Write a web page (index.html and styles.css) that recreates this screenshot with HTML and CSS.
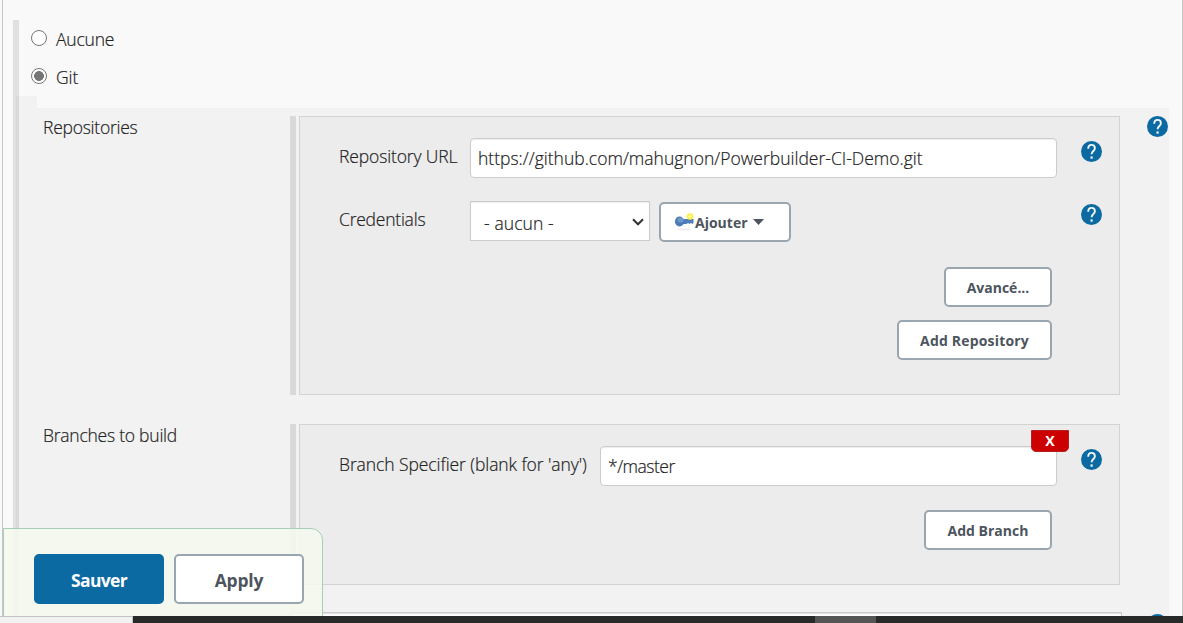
FILE: index.html
```html
<!DOCTYPE html>
<html lang="fr">
<head>
<meta charset="utf-8">
<title>Configuration</title>
<link rel="stylesheet" href="styles.css">
</head>
<body>
<svg width="0" height="0" class="defs">
  <symbol id="help" viewBox="0 0 21 21">
    <circle cx="10.5" cy="10.5" r="10.5" fill="#0b6aa2"/>
    <path d="M7.2 7.8C7.2 5.300 8.6 3.900 10.5 3.900S13.9 5.300 13.9 7.3C13.9 9.800 10.6 10.2 10.6 13.2" fill="none" stroke="#f2f6f9" stroke-width="1.9"/>
    <rect x="9.5" y="15.4" width="2.2" height="2.3" fill="#f2f6f9"/>
  </symbol>
</svg>
<main class="page">
  <div class="scm">
    <div class="choice"><span class="radio"></span><span class="t-aucune">Aucune</span></div>
    <div class="choice"><span class="radio on"></span><span class="t-git">Git</span></div>
    <section class="details">
      <div class="row repos">
        <div class="name"><span class="t-repos">Repositories</span></div>
        <div class="bar"></div>
        <div class="box">
          <div class="field">
            <label><span class="t-url">Repository URL</span></label>
            <div class="input"><span class="t-link">https://github.com/mahugnon/Powerbuilder-CI-Demo.git</span></div>
            <svg class="help"><use href="#help"/></svg>
          </div>
          <div class="field cred">
            <label><span class="t-cred">Credentials</span></label>
            <div class="select"><span class="t-none">- aucun -</span>
              <svg width="12" height="8" viewBox="0 0 12 8"><path d="M1 1.300L6 6.300L11 1.300" fill="none" stroke="#333" stroke-width="2"/></svg>
            </div>
            <div class="btn add">
              <svg width="20" height="20" viewBox="0 0 20 20">
                <ellipse cx="9" cy="17.500" rx="7" ry="1" fill="#eeeeee"/>
                <path d="M8 7h10.500v4l-1 1-1.500-1-1.500 1-1.500-1-1.500 1H8z" fill="#527eb5"/>
                <ellipse cx="4.500" cy="9.500" rx="4.600" ry="5" fill="#4c7bb5"/>
                <ellipse cx="5.500" cy="8" rx="3" ry="2.500" fill="#7099cb"/>
                <circle cx="15" cy="4.500" r="3.300" fill="#fff14a"/>
                <circle cx="15" cy="4.500" r="1.300" fill="#fffab0"/>
              </svg><span class="t-add">Ajouter</span>
              <svg class="caret" width="11" height="6" viewBox="0 0 11 6"><path d="M0 0h11L5.500 6z" fill="#4d545d"/></svg>
            </div>
            <svg class="help"><use href="#help"/></svg>
          </div>
          <div class="actions">
            <div class="btn b-adv"><span class="t-adv">Avancé...</span></div>
            <div class="btn b-repo"><span class="t-addrepo">Add Repository</span></div>
          </div>
        </div>
        <svg class="help outer"><use href="#help"/></svg>
      </div>
      <div class="row branches">
        <div class="name"><span class="t-branches">Branches to build</span></div>
        <div class="bar"></div>
        <div class="box">
          <div class="field wide">
            <label><span class="t-spec">Branch Specifier (blank for 'any')</span></label>
            <div class="input"><span class="t-master">*/master</span></div>
            <svg class="help"><use href="#help"/></svg>
          </div>
          <div class="actions">
            <div class="btn b-branch"><span class="t-addbranch">Add Branch</span></div>
          </div>
          <div class="remove">X</div>
        </div>
      </div>
      <div class="row next">
        <div class="name"></div>
        <div class="nextbox"></div>
        <svg class="help outer"><use href="#help"/></svg>
      </div>
    </section>
  </div>
  <div class="sticky">
    <div class="big primary"><span class="t-save">Sauver</span></div>
    <div class="big"><span class="t-apply">Apply</span></div>
  </div>
</main>
<footer class="taskbar"><div class="status"></div><div class="task"></div></footer>
</body>
</html>
```
FILE: styles.css
```css
* { box-sizing: border-box; }
body {
  margin: 0;
  width: 1183px;
  height: 623px;
  overflow: hidden;
  background: #f9f9f9;
  font: 300 17.5px/24px "Open Sans", "Noto Sans", sans-serif;
  color: #222;
  -webkit-text-stroke: .2px #222;
}
svg { display: block; flex: none; }
span { white-space: nowrap; }
.t-aucune { letter-spacing: -.2px; }
.t-git { letter-spacing: -.1px; }
.t-repos { letter-spacing: -.25px; }
.t-url { letter-spacing: -.13px; }
.t-link { letter-spacing: 0; }
.t-cred { letter-spacing: -.23px; }
.t-none { letter-spacing: .1px; }
.t-branches { letter-spacing: -.24px; }
.t-spec { letter-spacing: -.08px; }
.t-master { letter-spacing: -.5px; }
.t-save { letter-spacing: -.65px; }
.t-apply { letter-spacing: -.2px; }
.t-addrepo { letter-spacing: .18px; }
.defs { position: absolute; }
.page {
  position: relative;
  height: 616px;
  margin-left: 2px;
  padding: 20px 13px 0 10px;
  overflow: hidden;
  border: 1px solid #c6c6c6;
  border-width: 0 1px;
}
.scm { border-left: 6px solid #e0e0e0; height: 640px; }
.choice { display: flex; height: 38px; padding: 7px 0 0 12px; }
.choice .radio { margin: 3px 9px 0 0; }
.radio {
  width: 16px;
  height: 16px;
  border: 1px solid #767676;
  border-radius: 50%;
  background: #fff;
}
.radio.on { background: radial-gradient(circle, #757575 4.600px, #fff 5.200px); }
.details {
  margin-left: -3px;
  height: 560px;
  padding-top: 20px;
  border-left: 3px solid #d9d9d9;
  background:
    linear-gradient(#f2f2f2, #f2f2f2) 0 0 / 18px 12px no-repeat,
    linear-gradient(#f2f2f2, #f2f2f2) 0 12px / 100% 600px no-repeat;
}
.row { display: flex; }
.name { width: 271px; padding-left: 24px; margin-top: -1px; flex: none; }
.bar { width: 6px; margin-right: 3px; background: #d9d9d9; flex: none; }
.box {
  position: relative;
  width: 821px;
  flex: none;
  border: 1px solid #d3d3d3;
  background: #ececec;
  padding: 21px 0 0 39px;
}
.repos { height: 279px; margin-bottom: 29px; }
.branches { height: 161px; margin-bottom: 27px; }
.help { width: 21px; height: 21px; margin: 3px 0 0 24px; }
.help.outer { margin: 0 0 0 27px; }
.field { display: flex; height: 40px; }
.field label { width: 131px; padding-top: 6px; flex: none; }
.field.wide label { width: 261px; }
.cred { margin-top: 23px; }
.input, .select {
  flex: none;
  width: 587px;
  height: 40px;
  padding: 7px 7px;
  border: 1px solid #ccc;
  border-radius: 4px;
  background: #fff;
  box-shadow: inset 0 1px 1px #eee;
}
.wide .input { width: 457px; }
.select {
  display: flex;
  width: 180px;
  padding: 9px 5px 0 13px;
  border-radius: 0;
  justify-content: space-between;
}
.select svg { margin-top: 7px; }
.cred .help { margin-left: 290px; }
.btn {
  height: 40px;
  border: 2px solid #9aa6af;
  border-radius: 5px;
  background: #fff;
  color: #4d545d;
  font: 700 14px/38px "Open Sans", "Noto Sans", sans-serif;
  -webkit-text-stroke: 0;
  display: flex;
  justify-content: center;
  flex: none;
}
.add { width: 132px; margin: 1px 0 0 9px; justify-content: flex-start; padding-left: 14px; }
.add svg { margin-top: 8px; }
.add .caret { margin: 15px 0 0 5px; }
.actions {
  display: flex;
  flex-direction: column;
  align-items: flex-end;
  gap: 13px;
  padding: 26px 67px 0 0;
}
.branches .actions { padding-top: 24px; }
.b-adv { width: 108px; }
.b-repo { width: 155px; }
.b-branch { width: 128px; }
.remove {
  position: absolute;
  left: 731px;
  top: 5px;
  width: 38px;
  height: 22px;
  border: 1px solid #b32020;
  border-radius: 0 0 5px 5px;
  background: #c00;
  color: #fff;
  font-weight: 700;
  font-size: 14px;
  line-height: 20px;
  text-align: center;
  -webkit-text-stroke: 0;
}
.nextbox {
  width: 832px;
  height: 40px;
  border: 1px solid #ccc;
  background: #fff;
  box-shadow: inset 0 1px 1px #ddd;
}
.next .outer { margin: 2px 0 0 25px; }
.sticky {
  position: absolute;
  left: 0;
  top: 528px;
  width: 320px;
  height: 100px;
  padding: 25px 0 0 30px;
  display: flex;
  gap: 10px;
  border: 1px solid #a5cfb8;
  border-radius: 0 12px 0 0;
  background: rgba(245, 249, 239, .85);
}
.big {
  width: 130px;
  height: 50px;
  border: 2px solid #9aa6af;
  border-radius: 5px;
  background: #fff;
  color: #4d545d;
  font-weight: 700;
  line-height: 48px;
  text-align: center;
  -webkit-text-stroke: 0;
}
.big.primary { border-color: #0b6aa2; background: #0b6aa2; color: #fff; }
.taskbar { display: flex; height: 7px; background: #282a29; }
.status { width: 133px; background: #f2f2f2; border: 1px solid #c2c2c2; border-width: 1px 1px 0 0; }
.task { width: 61px; margin-left: 682px; background: #555; }
```
